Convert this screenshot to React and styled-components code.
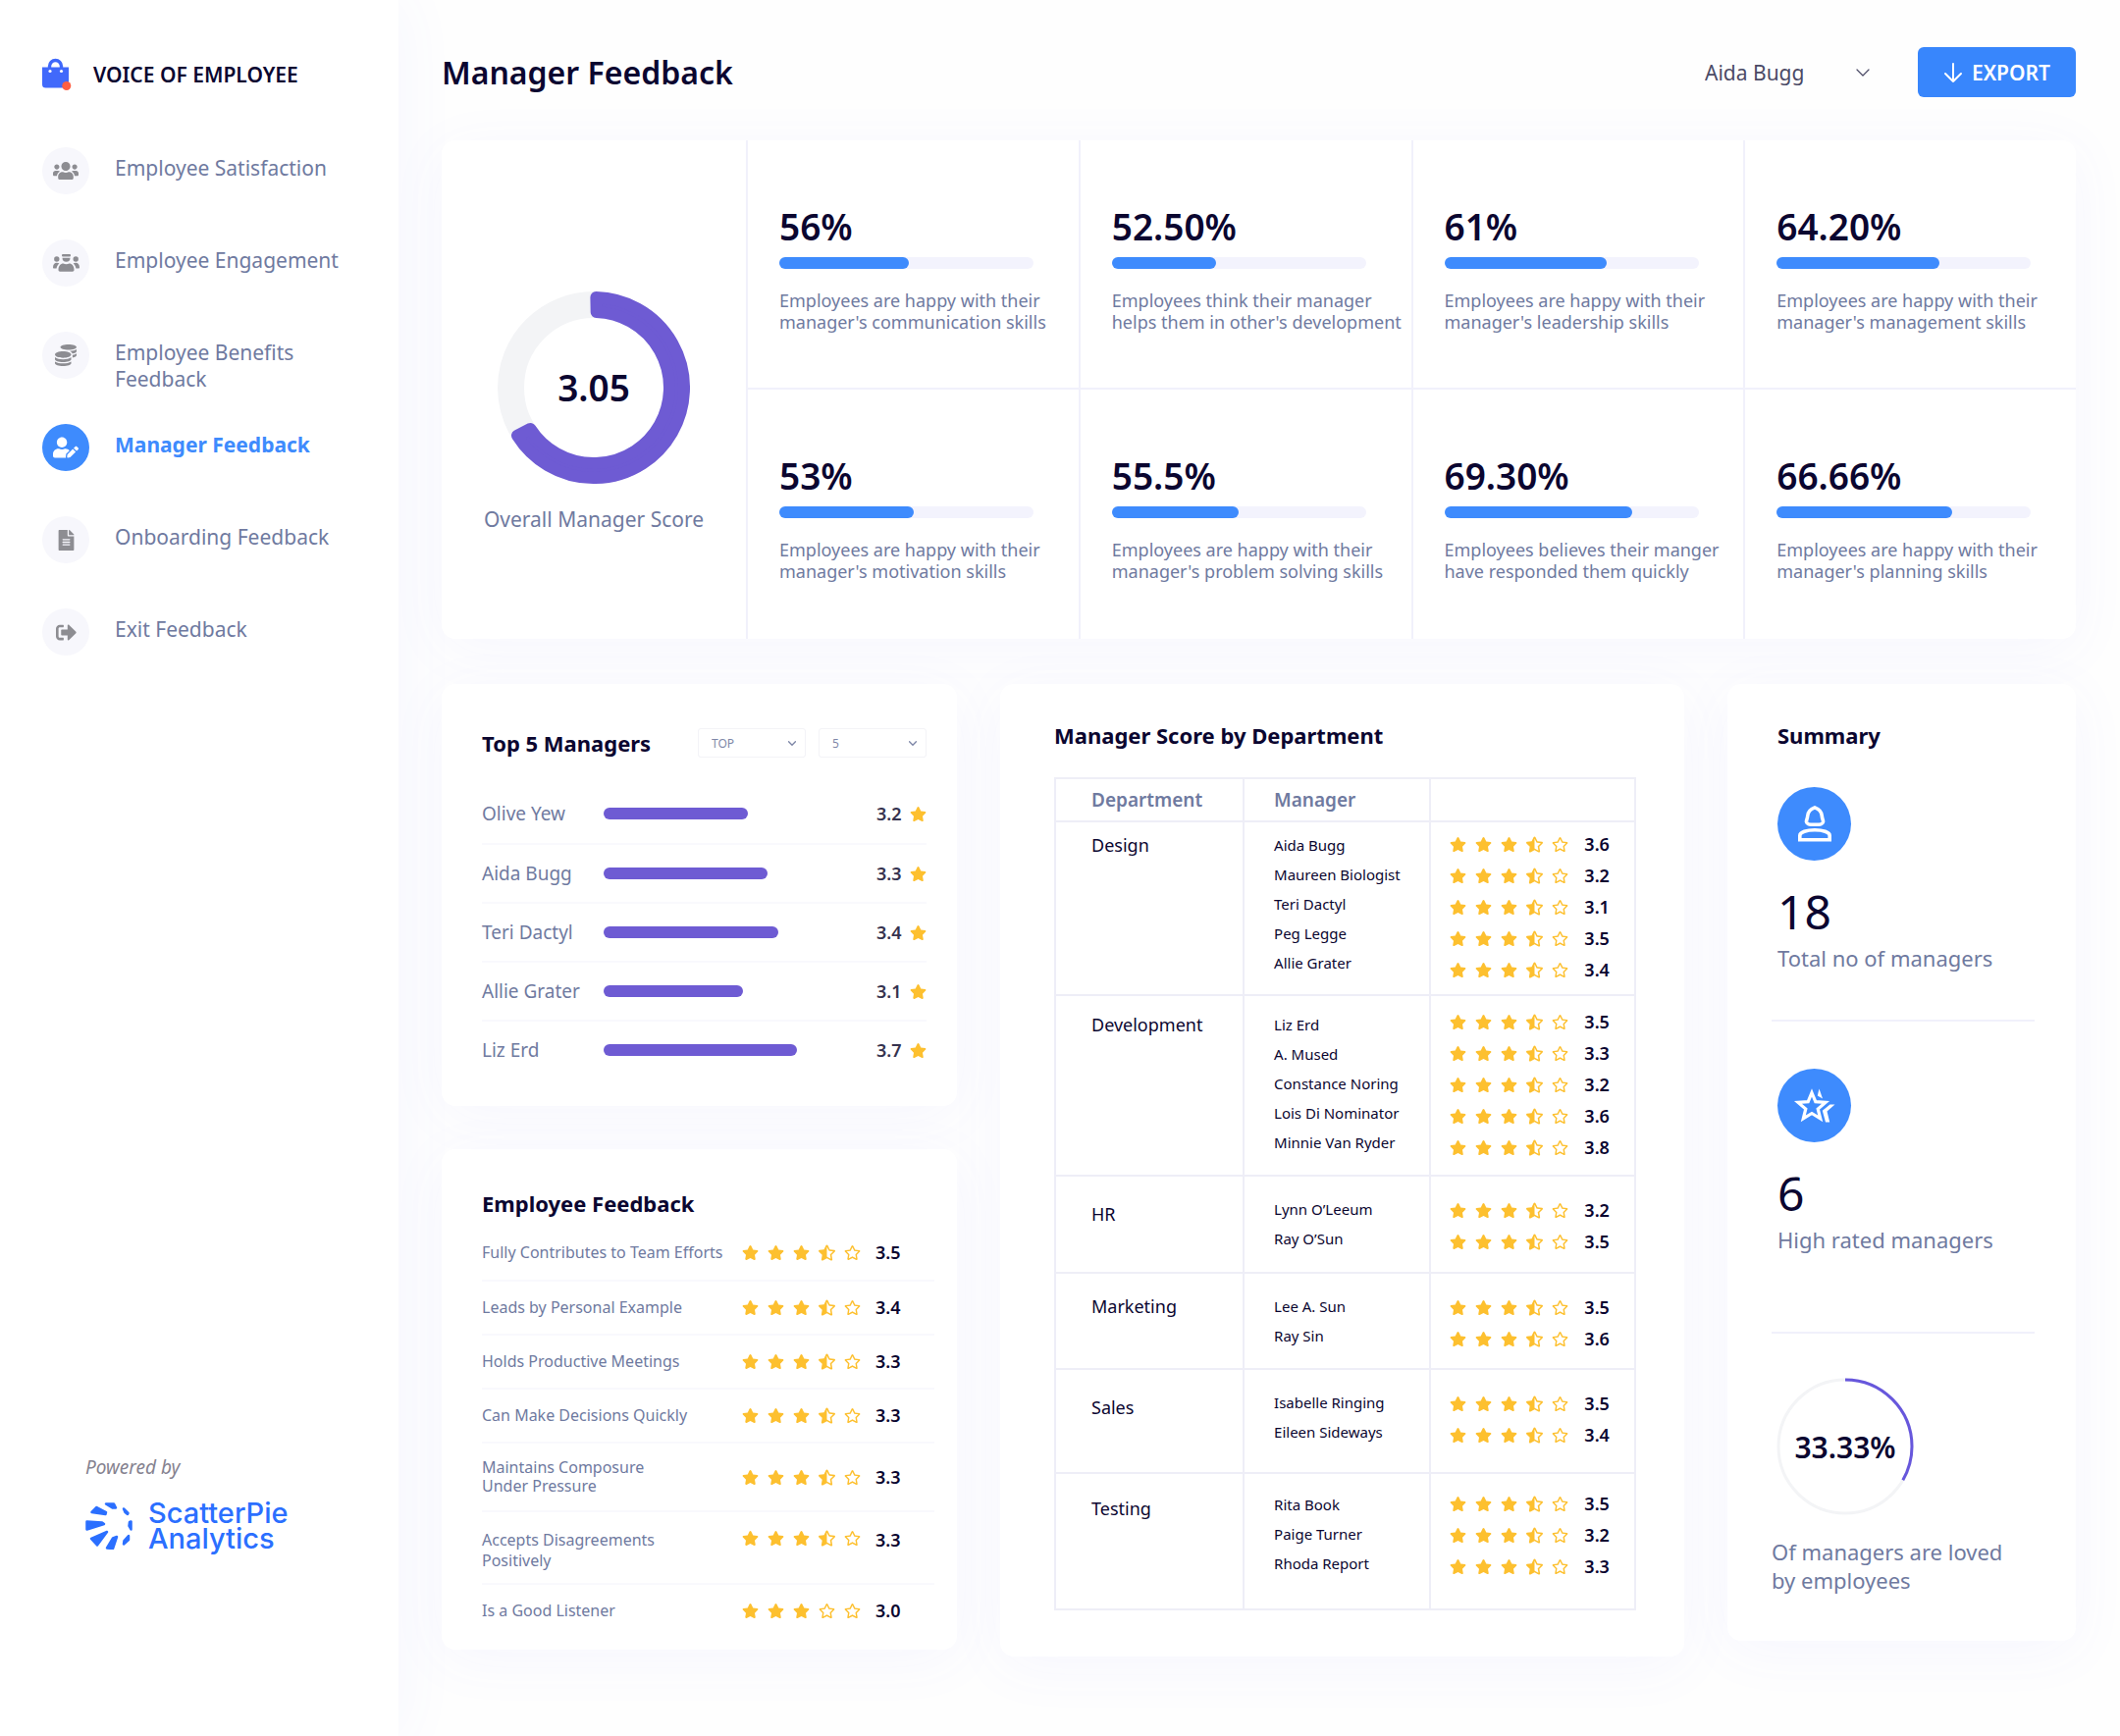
import React from "react";
import styled, { createGlobalStyle, css } from "styled-components";
import {
  FaUsers,
  FaCoins,
  FaUserEdit,
  FaFileAlt,
  FaSignOutAlt,
  FaStar,
  FaStarHalfAlt,
  FaRegStar,
} from "react-icons/fa";

const color = {
  ink: "#0b0630",
  muted: "#6f7aa0",
  blue: "#3e8bfd",
  purple: "#6e5bd3",
  star: "#fdc02f",
  line: "#f1f1fb",
  tableLine: "#eeeef7",
  track: "#f3f3fd",
};

const GlobalStyle = createGlobalStyle`
  *, *::before, *::after { box-sizing: border-box; }
  body {
    margin: 0;
    background: #fefefe;
    color: ${color.ink};
    font-family: "Noto Sans", "Open Sans", sans-serif;
    font-size: 18px;
  }
  h1, h2, p, ul { margin: 0; padding: 0; }
  ul { list-style: none; }
  button, select { font-family: inherit; }
  svg { display: block; flex: none; }
`;

const Shell = styled.div`
  display: flex;
  min-height: 100vh;
`;

/* ---------- sidebar ---------- */

const Sidebar = styled.aside`
  flex: 0 0 406px;
  display: flex;
  flex-direction: column;
  justify-content: space-between;
  padding: 56px 43px 188px;
  background: #fff;
  box-shadow: 0 0 60px rgba(90, 100, 255, 0.06);
`;

const Brand = styled.div`
  display: flex;
  align-items: center;
  gap: 22px;
  height: 40px;
  font-size: 21px;
  font-weight: 600;
`;

const NavList = styled.ul`
  display: flex;
  flex-direction: column;
  gap: 46px;
  margin-top: 54px;
`;

const NavLink = styled.a`
  display: flex;
  align-items: flex-start;
  gap: 26px;
  height: 48px;
  color: ${(p) => (p.$active ? color.blue : color.muted)};
  font-size: 21px;
  font-weight: ${(p) => (p.$active ? 700 : 400)};
  line-height: 27px;
  text-decoration: none;
`;

const NavIcon = styled.span`
  flex: none;
  display: grid;
  place-items: center;
  width: 48px;
  height: 48px;
  border-radius: 50%;
  background: ${(p) => (p.$active ? color.blue : "#f7f7fc")};
  color: ${(p) => (p.$active ? "#fff" : "#8d8d92")};
`;

const NavText = styled.span`
  max-width: 240px;
  padding-top: 8px;
`;

const Credit = styled.div`
  padding-left: 44px;
`;

const CreditNote = styled.p`
  color: #85828f;
  font-size: 19px;
  font-style: italic;
  line-height: 24px;
`;

const Partner = styled.div`
  display: flex;
  align-items: center;
  gap: 16px;
  margin-top: 22px;
  color: #2b6fff;
  font-family: Inter, sans-serif;
  font-size: 29px;
  font-weight: 500;
  line-height: 26px;
`;

/* ---------- page ---------- */

const Main = styled.main`
  flex: 1;
  min-width: 0;
  padding: 48px 45px 60px 44px;
`;

const Header = styled.header`
  display: flex;
  align-items: center;
  justify-content: space-between;
`;

const PageTitle = styled.h1`
  font-size: 32px;
  font-weight: 600;
  line-height: 51px;
`;

const HeaderTools = styled.div`
  display: flex;
  align-items: center;
  gap: 49px;
`;

const SelectBox = styled.label`
  display: flex;
  align-items: center;
  color: ${color.muted};

  & > select {
    flex: 1;
    min-width: 0;
    padding: 0;
    border: 0;
    outline: 0;
    appearance: none;
    background: none;
    color: inherit;
    font-size: inherit;
  }
`;

const PersonSelect = styled(SelectBox)`
  width: 168px;
  color: #4b4a66;
  font-size: 21px;
`;

const SmallSelect = styled(SelectBox)`
  width: 110px;
  height: 30px;
  padding: 0 9px 0 13px;
  border: 1px solid #f3f3f7;
  border-radius: 3px;
  color: #7f88a8;
  font-size: 12px;
`;

const ExportButton = styled.button`
  display: flex;
  align-items: center;
  justify-content: center;
  gap: 9px;
  width: 161px;
  height: 51px;
  padding: 0;
  border: 0;
  border-radius: 6px;
  background: #3886fc;
  color: #fff;
  font-size: 21px;
  font-weight: 600;
`;

const Card = styled.section`
  border-radius: 14px;
  background: #fff;
  box-shadow: 0 10px 60px rgba(90, 100, 255, 0.05);
`;

/* ---------- overview ---------- */

const Overview = styled(Card)`
  display: grid;
  grid-template-columns: 310px 1fr;
  margin-top: 44px;
`;

const ScorePanel = styled.div`
  display: flex;
  flex-direction: column;
  align-items: center;
  justify-content: center;
  gap: 21px;
  padding-top: 46px;
  color: ${color.muted};
  font-size: 21px;
  line-height: 30px;
`;

const Ring = styled.div`
  display: grid;
  place-items: center;
  width: ${(p) => p.$size}px;
  color: ${color.ink};
  font-size: ${(p) => p.$text}px;
  font-weight: 600;

  & > * { grid-area: 1 / 1; }
`;

const MetricGrid = styled.div`
  display: grid;
  grid-template-columns: repeat(4, 1fr);
`;

const Metric = styled.div`
  height: 254px;
  padding: 64px 0 0 32px;
  border-left: 2px solid ${color.line};

  &:nth-child(-n + 4) { border-bottom: 2px solid ${color.line}; }
`;

const MetricValue = styled.p`
  font-size: 37px;
  font-weight: 600;
  line-height: 48px;
`;

const MetricTrack = styled.div`
  width: 85%;
  max-width: 260px;
  height: 12px;
  margin-top: 7px;
  border-radius: 6px;
  background: ${color.track};
`;

const Fill = styled.div`
  height: 100%;
  border-radius: 6px;
  background: ${(p) => p.$color};
`;

const MetricText = styled.p`
  margin-top: 21px;
  color: ${color.muted};
  font-size: 18px;
  line-height: 22px;
  white-space: pre-line;
`;

/* ---------- lower panels ---------- */

const Panels = styled.div`
  display: grid;
  grid-template-columns: 525fr 697fr 355fr;
  align-items: start;
  gap: 44px;
  margin-top: 46px;
`;

const Stack = styled.div`
  display: grid;
  gap: 44px;
`;

const CardTitle = styled.h2`
  font-size: 22px;
  font-weight: 700;
  line-height: 30px;
  white-space: nowrap;
`;

const TopCard = styled(Card)`
  padding: 45px 31px 28px 41px;
`;

const TopHead = styled.div`
  display: flex;
  align-items: center;
  margin-bottom: 27px;
`;

const Filters = styled.div`
  display: flex;
  gap: 13px;
  margin-left: auto;
`;

const TopRow = styled.li`
  display: grid;
  grid-template-columns: 124px 1fr 26px 25px;
  align-items: center;
  height: 60px;
  color: ${color.muted};
  font-size: 19px;

  & + & { border-top: 2px solid #f9f9fd; }
`;

const TopTrack = styled.div`
  height: 12px;
`;

const Score = styled.span`
  width: 26px;
  color: ${(p) => (p.$soft ? "#36334f" : color.ink)};
  font-size: 18px;
  font-weight: 600;
`;

const StarSlot = styled.span`
  justify-self: end;
  color: ${color.star};
`;

const FeedbackCard = styled(Card)`
  padding: 40px 23px 13px 41px;
`;

const FeedbackList = styled.ul`
  margin-top: 8px;
`;

const FeedbackRow = styled.li`
  display: grid;
  grid-template-columns: 1fr 118px 26px;
  align-items: ${(p) => (p.$fromTop ? "start" : "center")};
  column-gap: 18px;
  height: ${(p) => p.$height}px;
  padding: ${(p) => (p.$fromTop ? "18px 34px 0 0" : "0 34px 0 0")};
  color: ${color.muted};
  font-size: 16px;
  line-height: ${(p) => (p.$fromTop ? 21 : 19)}px;

  & + & { border-top: 2px solid #f9f9fd; }
`;

const FeedbackText = styled.span`
  white-space: pre;
`;

const Stars = styled.span`
  display: flex;
  gap: 9px;
  color: ${color.star};
`;

/* ---------- department table ---------- */

const TableCard = styled(Card)`
  padding: 37px 49px 47px 55px;
`;

const ScoreTable = styled.table`
  width: 100%;
  margin-top: 28px;
  border-collapse: collapse;
  table-layout: fixed;
`;

const cell = css`
  padding: 0 0 0 30px;
  border: 2px solid ${color.tableLine};
  text-align: left;
  vertical-align: top;
`;

const HeadCell = styled.th`
  ${cell}
  width: ${(p) => p.$width};
  height: 44px;
  color: ${color.muted};
  font-size: 19px;
  font-weight: 600;
  vertical-align: middle;

  &:first-child { padding-left: 36px; }
`;

const BodyRow = styled.tr`
  height: ${(p) => p.$height}px;
`;

const DeptCell = styled.th`
  ${cell}
  padding: ${(p) => p.$top}px 0 0 36px;
  font-size: 18px;
  font-weight: 400;
  line-height: 30px;
`;

const BodyCell = styled.td`
  ${cell}
  padding-top: ${(p) => p.$top}px;
`;

const RatingCell = styled(BodyCell)`
  padding-left: 19px;
`;

const ManagerName = styled.li`
  font-size: 15px;
  line-height: 30px;
`;

const RatingLine = styled.li`
  display: flex;
  align-items: center;
  gap: 16px;
  height: 32px;
`;

/* ---------- summary ---------- */

const SummaryCard = styled(Card)`
  padding: 37px 42px 47px 45px;
`;

const SummaryBlock = styled.div`
  padding: ${(p) => p.$pad};
  border-bottom: ${(p) => (p.$last ? "0" : `2px solid ${color.line}`)};
`;

const Badge = styled.div`
  display: grid;
  place-items: center;
  width: 75px;
  height: 75px;
  margin-bottom: 24px;
  border-radius: 50%;
  background: ${color.blue};
  color: #fff;
`;

const SummaryTitle = styled(CardTitle)`
  padding-left: 6px;
`;

const BigNumber = styled.p`
  margin-bottom: 5px;
  font-size: 48px;
  line-height: 56px;
`;

const SummaryText = styled.p`
  color: ${color.muted};
  font-size: 22px;
  line-height: 29px;
  white-space: nowrap;
`;

const LovedText = styled(SummaryText)`
  margin-top: 23px;
  white-space: pre-line;
`;

/* ---------- drawings ---------- */

function BagLogo() {
  return (
    <svg width="30" height="34" viewBox="0 0 30 34" aria-hidden="true">
      <path d="M7.500 12V8.500a6 6 0 0 1 12 0V12" fill="none" stroke="#3f68fb" strokeWidth="3.400" />
      <path d="M0 9.500h27V27a3.500 3.500 0 0 1-3.500 3.500h-20A3.500 3.500 0 0 1 0 27z" fill="#4169fb" />
      <circle cx="8" cy="13.500" r="1.600" fill="#fff" />
      <circle cx="19.500" cy="13.500" r="1.600" fill="#fff" />
      <circle cx="24.800" cy="28.500" r="4.500" fill="#ff5f43" />
    </svg>
  );
}

function EngagedIcon() {
  return (
    <svg width="27" height="20" viewBox="0 0 27 20" fill="currentColor" aria-hidden="true">
      <rect x="9" y="1" width="9" height="2.500" rx="1" />
      <path d="M9.500 4.800h8a4 4 0 0 1-8 0z" />
      <circle cx="3.800" cy="6" r="2.700" />
      <circle cx="23.200" cy="6" r="2.700" />
      <path d="M0 14.500c0-3 1.600-4.800 3.800-4.800 1 0 1.900.3 2.600.9-1.600 1.200-2.500 2.900-2.800 5H1c-.6 0-1-.5-1-1.100zM27 14.500c0-3-1.600-4.800-3.800-4.800-1 0-1.900.3-2.600.9 1.600 1.200 2.500 2.900 2.800 5H26c.6 0 1-.5 1-1.100z" />
      <path d="M5.500 17c0-4 2.200-6.500 5-6.500 1 .6 1.900.8 3 .8s2-.2 3-.8c2.800 0 5 2.500 5 6.500 0 1-.7 1.700-1.600 1.700H7.100c-.9 0-1.600-.7-1.600-1.700z" />
    </svg>
  );
}

function PieLogo() {
  return (
    <svg width="48" height="48" viewBox="0 0 48 48" fill="#2b6fff" stroke="#2b6fff" strokeWidth="2.500" strokeLinejoin="round" aria-hidden="true">
      <path d="M1.500 19.500 17 20.500 19 22 1.500 27.500z" />
      <path d="M6.500 10 11.500 5 21 10 20.500 12z" />
      <path d="M21 1.500 29 1.500 31 5.500 27.500 5.500z" />
      <path d="M39 6.500 43.500 11 43 12 40.500 10z" />
      <path d="M46.500 19.500v8l-2-3.500 .5-4z" />
      <path d="M44 34 44 38 39 42.500 39.500 39z" />
      <path d="M32 35 28 47 22 46.500 28 36.500z" />
      <path d="M22 30 12 43.500 6 37z" />
    </svg>
  );
}

function PersonIcon() {
  return (
    <svg width="34" height="37" viewBox="0 0 34 37" fill="none" stroke="currentColor" strokeWidth="3.600" strokeLinejoin="round" aria-hidden="true">
      <path d="M8.500 16.500c-.3-2 1-3 1.200-6C10 6.500 12.500 3.500 17 1.900c4.500 1.600 7 4.600 7.300 8.600.2 3 1.500 4 1.200 6-.3 1.700-2.500 2.800-4.500 2.800h-8c-2 0-4.200-1.100-4.500-2.800z" />
      <path d="M1.800 34.800v-4.300c0-3.500 7.200-5.800 15.200-5.800s15.200 2.300 15.200 5.800v4.300z" strokeLinejoin="miter" />
    </svg>
  );
}

function StarsIcon() {
  return (
    <svg width="43" height="38" viewBox="0 0 43 38" fill="none" aria-hidden="true">
      <path d="M19 5.500 22.800 14.700 33 15.400 25.200 22 27.700 31.800 19 26.500 10.300 31.800 12.800 22 5 15.400 15.200 14.700z" stroke="currentColor" strokeWidth="3.200" strokeMiterlimit="6" />
      <path d="M26.500 1.500 30 11.500 24.800 8.500z" fill="currentColor" />
      <path d="M42.500 17.500H37.500L29.800 23.800 33 35.500H37.200L34.500 24.500z" fill="currentColor" />
    </svg>
  );
}

function Chevron({ width, height }) {
  return (
    <svg width={width} height={height} viewBox="0 0 14 8" fill="none" stroke="currentColor" strokeWidth={width > 10 ? 1.2 : 2.4} strokeLinecap="round" strokeLinejoin="round" aria-hidden="true">
      <path d="M1 1l6 6 6-6" />
    </svg>
  );
}

function DownArrow() {
  return (
    <svg width="20" height="22" viewBox="0 0 20 22" fill="none" stroke="currentColor" strokeWidth="2" strokeLinecap="round" strokeLinejoin="round" aria-hidden="true">
      <path d="M10 2v18M2 12l8 8 8-8" />
    </svg>
  );
}

function Donut() {
  const at = (r, deg) => {
    const a = (deg * Math.PI) / 180;
    return `${98 + r * Math.sin(a)} ${98 - r * Math.cos(a)}`;
  };
  return (
    <svg width="196" height="196" viewBox="0 0 196 196" aria-hidden="true">
      <circle cx="98" cy="98" r="84.500" fill="none" stroke="#f3f4f6" strokeWidth="27" />
      <path
        d={`M${at(92, 1.5)} A92 92 0 1 1 ${at(92, 238)} L${at(77, 237)} A77 77 0 1 0 ${at(77, 2)} Z`}
        fill={color.purple}
        stroke={color.purple}
        strokeWidth="12"
        strokeLinejoin="round"
      />
    </svg>
  );
}

function ThinRing() {
  const length = 2 * Math.PI * 68;
  return (
    <svg width="140" height="140" viewBox="0 0 140 140" fill="none" strokeWidth="3" aria-hidden="true">
      <circle cx="70" cy="70" r="68" stroke="#f3f4f6" />
      <circle cx="70" cy="70" r="68" stroke="#6757dc" strokeDasharray={`${length / 3} ${length}`} transform="rotate(-90 70 70)" />
    </svg>
  );
}

function StarRow({ full = 3, half = 1 }) {
  return (
    <Stars aria-hidden="true">
      {[0, 1, 2, 3, 4].map((i) => {
        if (i < full) return <FaStar key={i} size={17} />;
        if (i < full + half) return <FaStarHalfAlt key={i} size={17} />;
        return <FaRegStar key={i} size={17} />;
      })}
    </Stars>
  );
}

/* ---------- data ---------- */

const nav = [
  { label: "Employee Satisfaction", icon: <FaUsers size={26} /> },
  { label: "Employee Engagement", icon: <EngagedIcon /> },
  { label: "Employee Benefits Feedback", icon: <FaCoins size={22} /> },
  { label: "Manager Feedback", icon: <FaUserEdit size={26} />, active: true },
  { label: "Onboarding Feedback", icon: <FaFileAlt size={21} /> },
  { label: "Exit Feedback", icon: <FaSignOutAlt size={21} /> },
];

const metrics = [
  ["56%", 51, "Employees are happy with their\nmanager's communication skills"],
  ["52.50%", 41, "Employees think their manager\nhelps them in other's development"],
  ["61%", 64, "Employees are happy with their\nmanager's leadership skills"],
  ["64.20%", 64, "Employees are happy with their\nmanager's management skills"],
  ["53%", 53, "Employees are happy with their\nmanager's motivation skills"],
  ["55.5%", 50, "Employees are happy with their\nmanager's problem solving skills"],
  ["69.30%", 74, "Employees believes their manger\nhave responded them quickly"],
  ["66.66%", 69, "Employees are happy with their\nmanager's planning skills"],
];

const topManagers = [
  ["Olive Yew", 53, "3.2"],
  ["Aida Bugg", 60, "3.3"],
  ["Teri Dactyl", 64, "3.4"],
  ["Allie Grater", 51, "3.1"],
  ["Liz Erd", 71, "3.7"],
];

const feedback = [
  { text: "Fully Contributes to Team Efforts", score: "3.5" },
  { text: "Leads by Personal Example", score: "3.4" },
  { text: "Holds Productive Meetings", score: "3.3" },
  { text: "Can Make Decisions Quickly", score: "3.3" },
  { text: "Maintains Composure\nUnder Pressure", score: "3.3", height: 70 },
  { text: "Accepts Disagreements\nPositively", score: "3.3", height: 74, fromTop: true },
  { text: "Is a Good Listener", score: "3.0", half: 0 },
];

const departments = [
  {
    name: "Design", height: 177, top: [8, 8, 6],
    people: [["Aida Bugg", "3.6"], ["Maureen Biologist", "3.2"], ["Teri Dactyl", "3.1"], ["Peg Legge", "3.5"], ["Allie Grater", "3.4"]],
  },
  {
    name: "Development", height: 184, top: [14, 14, 10],
    people: [["Liz Erd", "3.5"], ["A. Mused", "3.3"], ["Constance Noring", "3.2"], ["Lois Di Nominator", "3.6"], ["Minnie Van Ryder", "3.8"]],
  },
  { name: "HR", height: 99, top: [23, 18, 18], people: [["Lynn O’Leeum", "3.2"], ["Ray O’Sun", "3.5"]] },
  { name: "Marketing", height: 98, top: [18, 18, 18], people: [["Lee A. Sun", "3.5"], ["Ray Sin", "3.6"]] },
  { name: "Sales", height: 106, top: [23, 18, 18], people: [["Isabelle Ringing", "3.5"], ["Eileen Sideways", "3.4"]] },
  { name: "Testing", height: 139, top: [20, 16, 14], people: [["Rita Book", "3.5"], ["Paige Turner", "3.2"], ["Rhoda Report", "3.3"]] },
];

/* ---------- app ---------- */

export default function App() {
  return (
    <>
      <GlobalStyle />
      <Shell>
        <Sidebar>
          <nav>
            <Brand><BagLogo />VOICE OF EMPLOYEE</Brand>
            <NavList>
              {nav.map((item) => (
                <li key={item.label}>
                  <NavLink href="#" $active={item.active} aria-current={item.active ? "page" : undefined}>
                    <NavIcon $active={item.active}>{item.icon}</NavIcon>
                    <NavText>{item.label}</NavText>
                  </NavLink>
                </li>
              ))}
            </NavList>
          </nav>
          <Credit>
            <CreditNote>Powered by</CreditNote>
            <Partner><PieLogo /><span>ScatterPie<br />Analytics</span></Partner>
          </Credit>
        </Sidebar>

        <Main>
          <Header>
            <PageTitle>Manager Feedback</PageTitle>
            <HeaderTools>
              <PersonSelect>
                <select aria-label="Manager" defaultValue="Aida Bugg"><option>Aida Bugg</option></select>
                <Chevron width={14} height={8} />
              </PersonSelect>
              <ExportButton type="button"><DownArrow />EXPORT</ExportButton>
            </HeaderTools>
          </Header>

          <Overview>
            <ScorePanel>
              <Ring $size={196} $text={37}><Donut /><span>3.05</span></Ring>
              <p>Overall Manager Score</p>
            </ScorePanel>
            <MetricGrid>
              {metrics.map(([value, width, text]) => (
                <Metric key={value}>
                  <MetricValue>{value}</MetricValue>
                  <MetricTrack><Fill $color={color.blue} style={{ width: `${width}%` }} /></MetricTrack>
                  <MetricText>{text}</MetricText>
                </Metric>
              ))}
            </MetricGrid>
          </Overview>

          <Panels>
            <Stack>
              <TopCard>
                <TopHead>
                  <CardTitle>Top 5 Managers</CardTitle>
                  <Filters>
                    <SmallSelect>
                      <select aria-label="Order" defaultValue="TOP"><option>TOP</option></select>
                      <Chevron width={8} height={5} />
                    </SmallSelect>
                    <SmallSelect>
                      <select aria-label="Count" defaultValue="5"><option>5</option></select>
                      <Chevron width={8} height={5} />
                    </SmallSelect>
                  </Filters>
                </TopHead>
                <ul>
                  {topManagers.map(([name, width, score]) => (
                    <TopRow key={name}>
                      <span>{name}</span>
                      <TopTrack><Fill $color={color.purple} style={{ width: `${width}%` }} /></TopTrack>
                      <Score $soft>{score}</Score>
                      <StarSlot><FaStar size={17} /></StarSlot>
                    </TopRow>
                  ))}
                </ul>
              </TopCard>

              <FeedbackCard>
                <CardTitle>Employee Feedback</CardTitle>
                <FeedbackList>
                  {feedback.map((row) => (
                    <FeedbackRow key={row.text} $height={row.height || 55} $fromTop={row.fromTop}>
                      <FeedbackText>{row.text}</FeedbackText>
                      <StarRow half={row.half} />
                      <Score>{row.score}</Score>
                    </FeedbackRow>
                  ))}
                </FeedbackList>
              </FeedbackCard>
            </Stack>

            <TableCard>
              <CardTitle>Manager Score by Department</CardTitle>
              <ScoreTable>
                <thead>
                  <tr>
                    <HeadCell $width="32.5%">Department</HeadCell>
                    <HeadCell $width="32.2%">Manager</HeadCell>
                    <HeadCell $width="35.3%" aria-label="Score" />
                  </tr>
                </thead>
                <tbody>
                  {departments.map((dept) => (
                    <BodyRow key={dept.name} $height={dept.height}>
                      <DeptCell scope="row" $top={dept.top[0]}>{dept.name}</DeptCell>
                      <BodyCell $top={dept.top[1]}>
                        <ul>{dept.people.map(([name]) => <ManagerName key={name}>{name}</ManagerName>)}</ul>
                      </BodyCell>
                      <RatingCell $top={dept.top[2]}>
                        <ul>
                          {dept.people.map(([name, score]) => (
                            <RatingLine key={name}><StarRow /><Score>{score}</Score></RatingLine>
                          ))}
                        </ul>
                      </RatingCell>
                    </BodyRow>
                  ))}
                </tbody>
              </ScoreTable>
            </TableCard>

            <SummaryCard>
              <SummaryTitle>Summary</SummaryTitle>
              <SummaryBlock $pad="38px 6px 48px">
                <Badge><PersonIcon /></Badge>
                <BigNumber>18</BigNumber>
                <SummaryText>Total no of managers</SummaryText>
              </SummaryBlock>
              <SummaryBlock $pad="48px 6px 79px">
                <Badge><StarsIcon /></Badge>
                <BigNumber>6</BigNumber>
                <SummaryText>High rated managers</SummaryText>
              </SummaryBlock>
              <SummaryBlock $pad="45px 0 0" $last>
                <Ring $size={150} $text={30}><ThinRing /><span>33.33%</span></Ring>
                <LovedText>{"Of managers are loved\nby employees"}</LovedText>
              </SummaryBlock>
            </SummaryCard>
          </Panels>
        </Main>
      </Shell>
    </>
  );
}
